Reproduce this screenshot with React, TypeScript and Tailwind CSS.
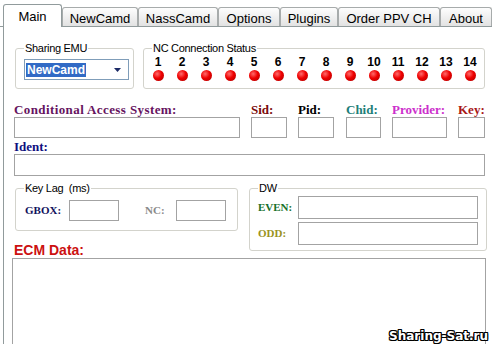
import React from "react";

const tabs: { label: string; w: string; active?: boolean }[] = [
  { label: "Main", w: "w-[59px]", active: true },
  { label: "NewCamd", w: "w-[76px]" },
  { label: "NassCamd", w: "w-[80px]" },
  { label: "Options", w: "w-[62px]" },
  { label: "Plugins", w: "w-[58px]" },
  { label: "Order PPV CH", w: "w-[102px]" },
  { label: "About", w: "w-[52px]" },
];

const casFields: { label: string; color: string; w: string; ml: string }[] = [
  { label: "Conditional Access System:", color: "text-[#66145f] tracking-[0.4px]", w: "w-[226px]", ml: "ml-0" },
  { label: "Sid:", color: "text-[#7a0a0a]", w: "w-[36px]", ml: "ml-[11px]" },
  { label: "Pid:", color: "text-black", w: "w-[36px]", ml: "ml-[11px]" },
  { label: "Chid:", color: "text-[#1f7f7a]", w: "w-[35px]", ml: "ml-[12px]" },
  { label: "Provider:", color: "text-[#cc2fcc]", w: "w-[55px]", ml: "ml-[11px]" },
  { label: "Key:", color: "text-[#a81818]", w: "w-[27px]", ml: "ml-[11px]" },
];

function Box({ className }: { className: string }) {
  return <div className={`border border-[#a3a3a3] bg-white ${className}`} />;
}

function Group({
  title,
  className,
  children,
}: {
  title: string;
  className: string;
  children?: React.ReactNode;
}) {
  return (
    <fieldset className={`border border-[#d3d3cc] rounded-[3px] ${className}`}>
      <legend className="ml-[8px] px-[1px] text-[11px] leading-[14px] tracking-[-0.3px] text-black whitespace-pre">
        {title}
      </legend>
      {children}
    </fieldset>
  );
}

export default function App() {
  const serif = "font-['Liberation_Serif',serif] font-bold";
  return (
    <div className="relative w-[492px] h-[344px] overflow-hidden bg-white font-['Liberation_Sans',Arial,sans-serif] text-black">
      {/* tab strip */}
      <div className="flex items-end h-[27px] pl-[3px] border-b border-[#919b9c]">
        {tabs.map((t) =>
          t.active ? (
            <div
              key={t.label}
              className={`${t.w} h-[23px] -mb-px relative bg-white border-t border-l border-r border-[#919b9c] rounded-t-[3px] flex items-center justify-center text-[13px] leading-[15px]`}
            >
              {t.label}
            </div>
          ) : (
            <div
              key={t.label}
              className={`${t.w} h-[19px] pt-[2px] bg-gradient-to-b from-[#fdfdfd] to-[#e2e2e2] border-t border-l border-r border-[#a7abab] rounded-t-[3px] flex items-center justify-center text-[13px] leading-[15px] whitespace-nowrap`}
            >
              {t.label}
            </div>
          )
        )}
      </div>

      {/* panel */}
      <div className="ml-[3px] h-[317px] border-l border-[#919b9c] flex flex-col">
        {/* row 1 */}
        <div className="flex mt-[14px] ml-[11px]">
          <Group title="Sharing EMU" className="w-[119px] h-[48px]">
            <div className="mt-[4px] ml-[8px] w-[105px] h-[21px] border border-[#7f9db9] bg-white flex items-center pl-[1px]">
              <span className="bg-[#316ac5] text-white text-[12px] leading-[14px] font-bold px-[1px]">
                NewCamd
              </span>
              <svg className="ml-auto mr-[7px]" width="7" height="4" viewBox="0 0 7 4">
                <path d="M0 0h7L3.5 4z" fill="#1c2a66" />
              </svg>
            </div>
          </Group>
          <Group title="NC Connection Status" className="ml-[9px] w-[342px] h-[48px]">
            <div className="grid grid-cols-[repeat(14,24px)] pl-[2px]">
              {Array.from({ length: 14 }, (_, i) => (
                <div key={i} className="flex flex-col items-center">
                  <span className="text-[12px] leading-[14px] font-bold">{i + 1}</span>
                  <span className="mt-[1px] w-[11px] h-[11px] rounded-full bg-[radial-gradient(circle_at_38%_35%,#ff6a6a_0%,#ee0000_45%,#a80000_100%)]" />
                </div>
              ))}
            </div>
          </Group>
        </div>

        {/* row 2 */}
        <div className="flex mt-[13px] ml-[10px]">
          {casFields.map((f) => (
            <div key={f.label} className={`${f.w} ${f.ml} flex flex-col`}>
              <span className={`${serif} ${f.color} text-[13px] leading-[15px] whitespace-nowrap`}>
                {f.label}
              </span>
              <Box className="h-[21px]" />
            </div>
          ))}
        </div>

        {/* ident */}
        <div className="ml-[10px] mt-[2px] flex flex-col">
          <span className={`${serif} text-[#10107f] text-[13px] leading-[14px]`}>Ident:</span>
          <Box className="w-[471px] h-[22px]" />
        </div>

        {/* row 3 */}
        <div className="flex mt-[5px] ml-[11px] h-[80px]">
          <div className="w-[223px] flex flex-col">
            <Group title="Key Lag  (ms)" className="w-[223px] h-[50px]">
              <div className="flex items-center mt-[5px] pl-[9px]">
                <span className={`${serif} text-[#10105c] text-[11px] w-[44px]`}>GBOX:</span>
                <Box className="w-[50px] h-[21px]" />
                <span className={`${serif} text-[#8a8a8a] text-[11px] w-[31px] ml-[26px]`}>NC:</span>
                <Box className="w-[50px] h-[21px]" />
              </div>
            </Group>
            <span className="mt-[11px] -ml-[1px] text-[14px] leading-[16px] font-bold text-[#cc1111]">
              ECM Data:
            </span>
          </div>
          <Group title="DW" className="ml-[11px] w-[238px] h-[70px]">
            <div className="flex items-center mt-[1px] pl-[8px]">
              <span className={`${serif} text-[#17702a] text-[11px] w-[40px]`}>EVEN:</span>
              <Box className="w-[180px] h-[23px]" />
            </div>
            <div className="flex items-center mt-[3px] pl-[8px]">
              <span className={`${serif} text-[#9a9222] text-[11px] w-[40px]`}>ODD:</span>
              <Box className="w-[180px] h-[23px]" />
            </div>
          </Group>
        </div>

        {/* ecm data */}
        <Box className="ml-[8px] w-[474px] h-[90px] shrink-0" />
      </div>

      <span className="absolute right-[4px] bottom-[1px] font-['DejaVu_Sans',sans-serif] font-bold text-[12px] leading-[14px] text-white [text-shadow:1px_0_0_#000,-1px_0_0_#000,0_1px_0_#000,0_-1px_0_#000,1px_1px_0_#000,-1px_-1px_0_#000,1px_-1px_0_#000,-1px_1px_0_#000]">
        Sharing-Sat.ru
      </span>
    </div>
  );
}
